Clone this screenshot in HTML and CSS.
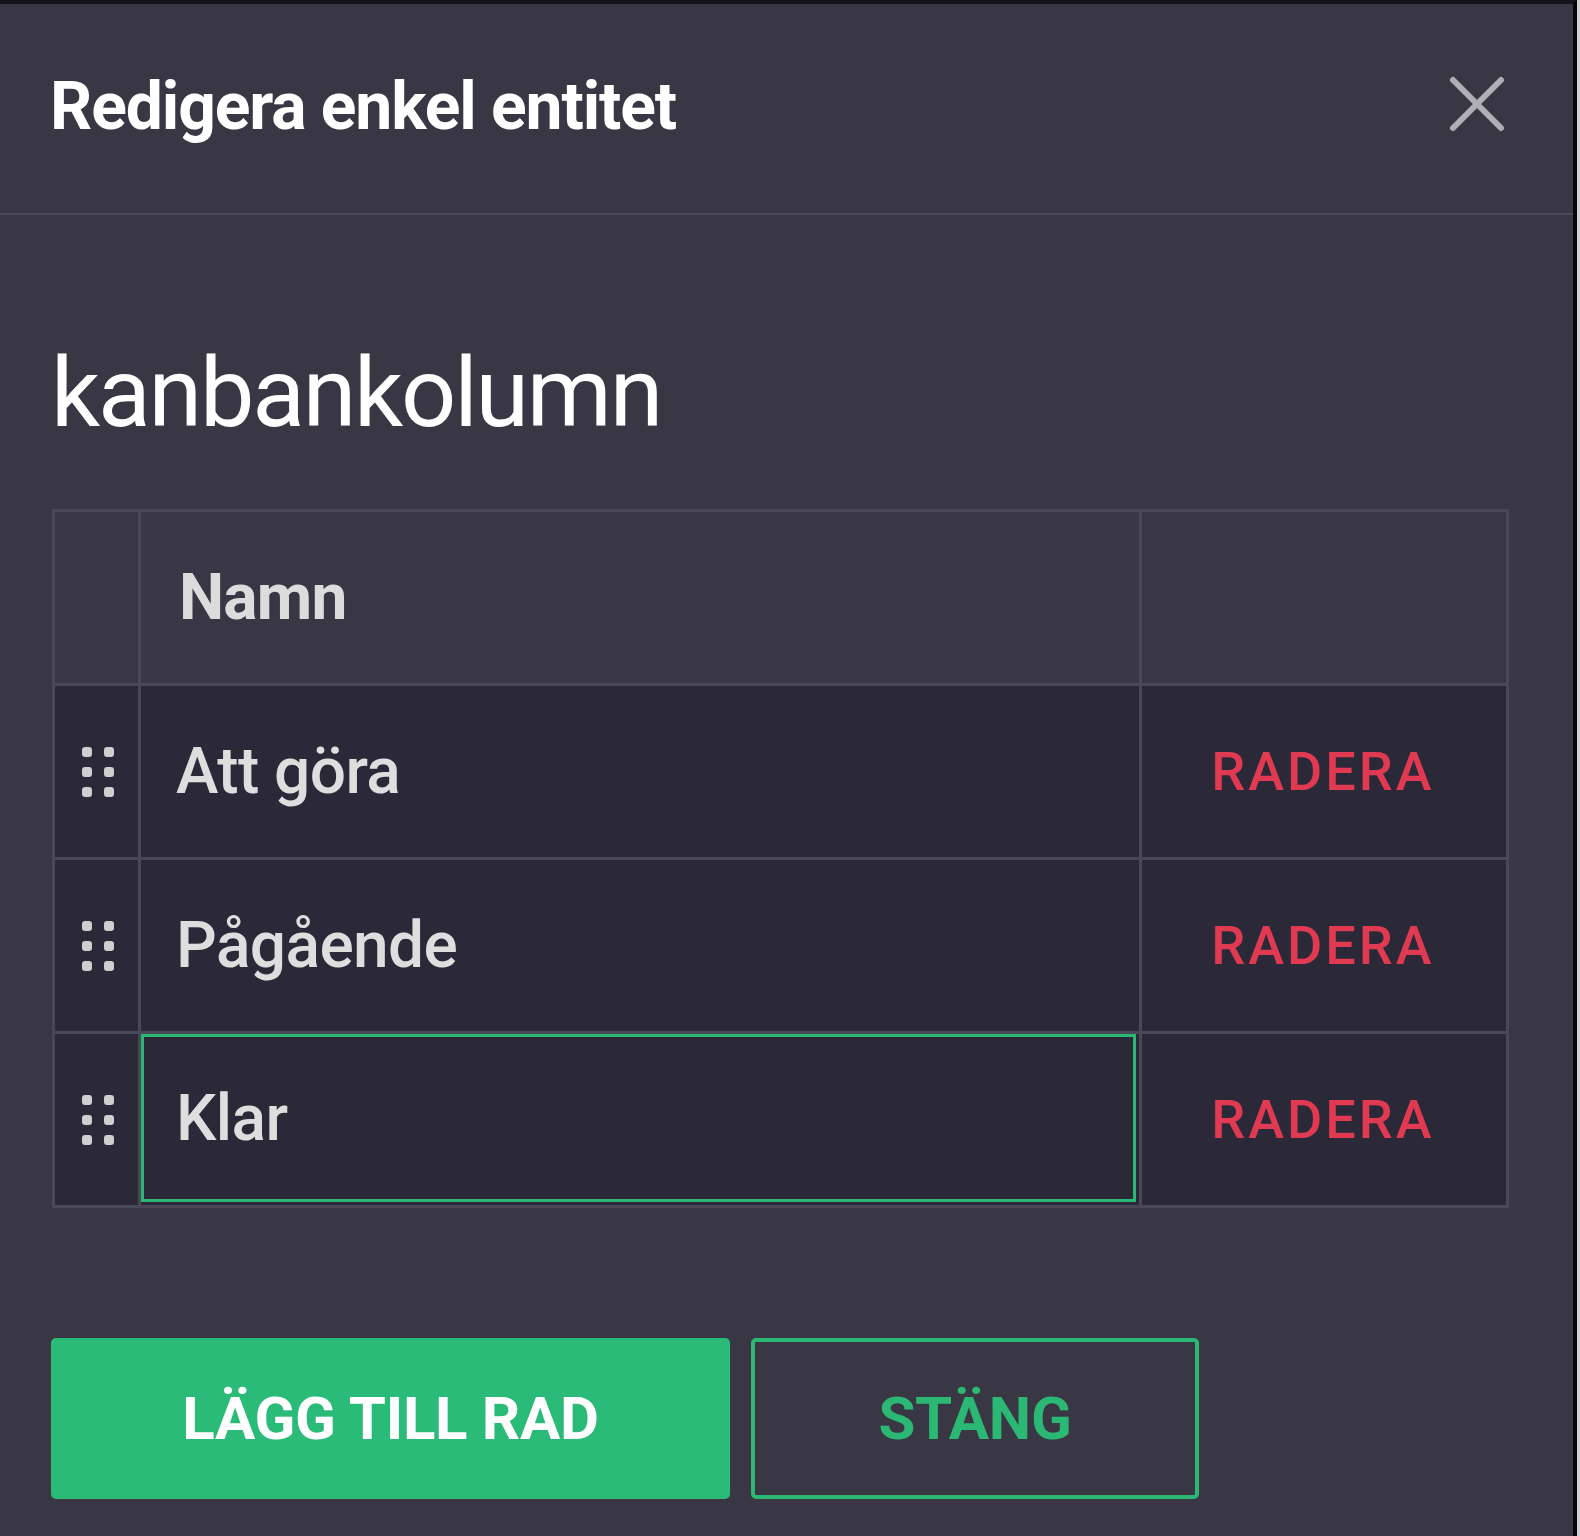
FILE: index.html
```html
<!DOCTYPE html>
<html lang="sv">
<head>
<meta charset="utf-8">
<title>Redigera enkel entitet</title>
<link rel="stylesheet" href="styles.css">
</head>
<body>
<div class="dialog">
  <header class="dialog-header">
    <h1 class="dialog-title">Redigera enkel entitet</h1>
    <button class="close-btn" aria-label="Stäng">
      <svg viewBox="0 0 58 58" width="58" height="58"><path d="M5 5 L53 53 M53 5 L5 53" stroke="#b0aeb5" stroke-width="6" stroke-linecap="round" fill="none"/></svg>
    </button>
  </header>
  <div class="dialog-body">
    <h2 class="entity-name">kanbankolumn</h2>
    <table class="grid">
      <thead>
        <tr>
          <th class="col-handle"></th>
          <th class="col-name">Namn</th>
          <th class="col-action"></th>
        </tr>
      </thead>
      <tbody>
        <tr>
          <td class="col-handle"><span class="dots"><i></i><i></i><i></i><i></i><i></i><i></i></span></td>
          <td class="col-name"><div class="cell-text">Att göra</div></td>
          <td class="col-action"><span class="delete">RADERA</span></td>
        </tr>
        <tr>
          <td class="col-handle"><span class="dots"><i></i><i></i><i></i><i></i><i></i><i></i></span></td>
          <td class="col-name"><div class="cell-text">Pågående</div></td>
          <td class="col-action"><span class="delete">RADERA</span></td>
        </tr>
        <tr>
          <td class="col-handle"><span class="dots"><i></i><i></i><i></i><i></i><i></i><i></i></span></td>
          <td class="col-name"><div class="cell-text editing">Klar</div></td>
          <td class="col-action"><span class="delete">RADERA</span></td>
        </tr>
      </tbody>
    </table>
    <div class="actions">
      <button class="btn btn-primary">LÄGG TILL RAD</button>
      <button class="btn btn-outline">STÄNG</button>
    </div>
  </div>
</div>
</body>
</html>
```

FILE: styles.css
```css
* { box-sizing: border-box; }
html, body { margin: 0; padding: 0; }
body {
  background: #cfcfd2;
  font-family: Roboto, "Noto Sans", sans-serif;
  height: 1536px;
  overflow: hidden;
}
.dialog {
  width: 1577px;
  height: 1536px;
  background: #3a3744;
  border-top: 4px solid #141219;
  border-right: 4px solid #050407;
}
.dialog-header {
  height: 211px;
  border-bottom: 2px solid #4b4858;
  display: flex;
  align-items: center;
  justify-content: space-between;
  padding: 0 67px 0 50px;
}
.dialog-title {
  margin: 0;
  color: #ffffff;
  font-size: 66px;
  font-weight: 700;
  letter-spacing: -1.1px;
  line-height: 1;
  margin-top: -4px;
}
.close-btn {
  background: none;
  border: 0;
  padding: 0;
  width: 58px;
  height: 58px;
  margin-top: -10px;
  display: block;
}
.close-btn svg { display: block; }
.dialog-body {
  padding: 0 70px 0 52px;
}
.entity-name {
  margin: 0;
  padding-top: 130px;
  color: #ffffff;
  font-size: 97px;
  font-weight: 400;
  letter-spacing: -2.2px;
  line-height: 1;
  height: 294px;
  margin-left: -1px;
}
.grid {
  border-collapse: collapse;
  width: 1454px;
  table-layout: fixed;
}
.grid th, .grid td {
  border: 3px solid #4a4757;
  padding: 0;
  height: 174px;
}
.grid thead th { background: #3a3744; }
.grid tbody td { background: #2b2838; }
.col-handle { width: 86px; text-align: center; }
.col-name { width: 1001px; }
.col-action { width: 367px; text-align: center; }
.grid th.col-name {
  text-align: left;
  padding-left: 38px;
  color: #dcdcdc;
  font-size: 64px;
  font-weight: 700;
  letter-spacing: -0.8px;
}
.cell-text {
  color: #dedede;
  font-size: 64px;
  font-weight: 500;
  letter-spacing: -0.6px;
  padding-left: 35px;
  height: 100%;
  display: flex;
  align-items: center;
}
.cell-text.editing {
  border: 3px solid #2bb774;
  margin: 0 3px 0 0;
  height: calc(100% - 3px);
  padding-left: 32px;
}
.grid td.col-name { vertical-align: top; }
.delete {
  color: #e03a52;
  font-size: 54px;
  font-weight: 500;
  letter-spacing: 3px;
  position: relative;
  left: -1px;
}
.dots {
  display: inline-grid;
  grid-template-columns: 10px 10px;
  column-gap: 12px;
  row-gap: 10px;
  vertical-align: middle;
  margin-left: 2px;
}
.dots i {
  display: block;
  width: 10px;
  height: 10px;
  border-radius: 3px;
  background: #cfcfcf;
}
.actions {
  display: flex;
  gap: 21px;
  margin-top: 130px;
}
.btn {
  height: 161px;
  font-family: Roboto, "Noto Sans", sans-serif;
  font-size: 60px;
  font-weight: 700;
  letter-spacing: -0.3px;
  border-radius: 5px;
  cursor: pointer;
}
.btn-primary {
  width: 679px;
  background: #2bbb78;
  color: #ffffff;
  border: 0;
  margin-left: -1px;
}
.btn-outline {
  width: 448px;
  background: #3a3744;
  color: #2bb774;
  border: 4px solid #2bb774;
}
```
